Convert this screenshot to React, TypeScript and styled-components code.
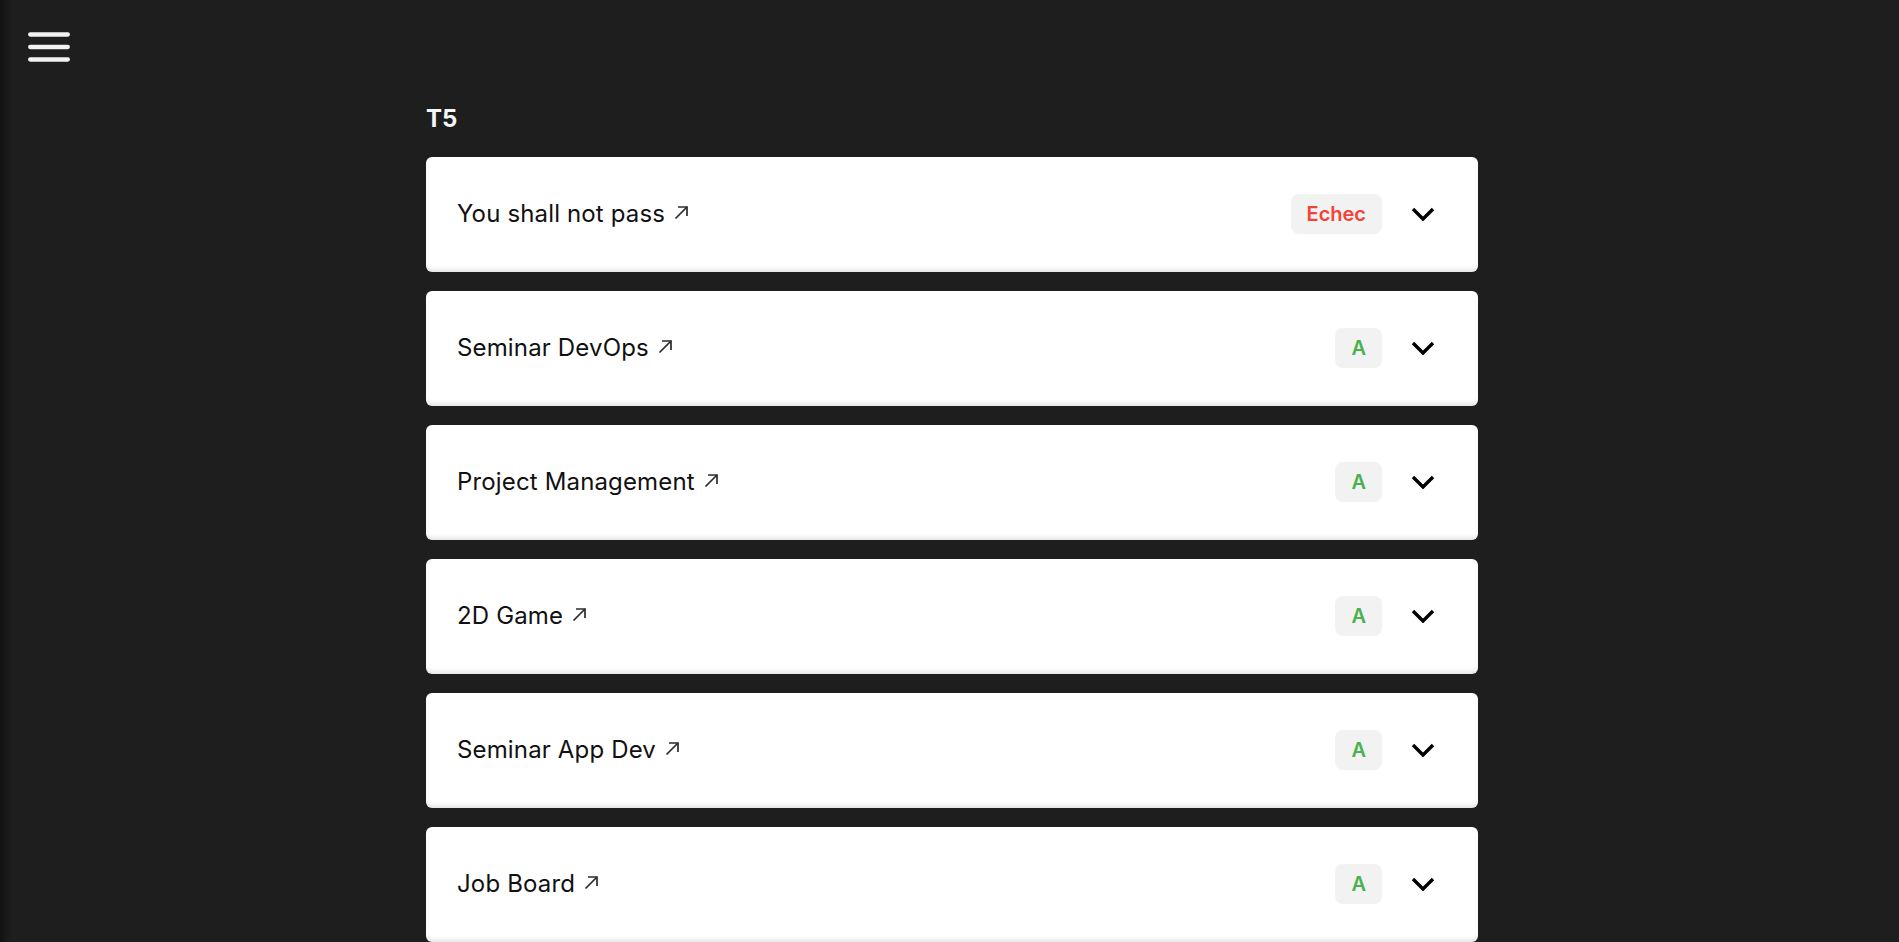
import React from 'react'
import styled, { createGlobalStyle } from 'styled-components'

interface Course {
  name: string
  grade: string
  failed?: boolean
}

const courses: Course[] = [
  { name: 'You shall not pass', grade: 'Echec', failed: true },
  { name: 'Seminar DevOps', grade: 'A' },
  { name: 'Project Management', grade: 'A' },
  { name: '2D Game', grade: 'A' },
  { name: 'Seminar App Dev', grade: 'A' },
  { name: 'Job Board', grade: 'A' },
]

const GlobalStyle = createGlobalStyle`
  html, body {
    margin: 0;
    padding: 0;
    background-color: #1e1e1e;
    background-image: linear-gradient(to right, #111111 0px, #171717 5px, #1e1e1e 12px);
    background-repeat: no-repeat;
    min-height: 100%;
    font-family: Inter, "Noto Sans", Roboto, sans-serif;
  }
  * {
    box-sizing: border-box;
  }
`

const Page = styled.div`
  min-height: 942px;
  overflow: hidden;
`

const Header = styled.header`
  padding: 32px 0 0 28px;
  height: 64px;
`

const MenuButton = styled.button`
  display: block;
  background: none;
  border: none;
  padding: 0;
  cursor: pointer;
  width: 42px;
  height: 32px;
`

const Main = styled.main`
  width: 1052px;
  margin: 0 auto;
  padding-left: 5px;
  box-sizing: content-box;
`

const SectionTitle = styled.h2`
  margin: 40px 0 24px;
  font-size: 24px;
  line-height: 29px;
  font-weight: 700;
  color: #f4f6f8;
`

const List = styled.div`
  display: flex;
  flex-direction: column;
  gap: 19px;
`

const Card = styled.div`
  height: 115px;
  background: #ffffff;
  border-radius: 6px;
  box-shadow: inset 0 -5px 5px -3px rgba(0, 0, 0, 0.12);
  display: flex;
  align-items: center;
  padding: 0 43px 2px 31px;
`

const CourseLink = styled.a`
  display: flex;
  align-items: center;
  gap: 9px;
  font-size: 24px;
  letter-spacing: 0.15px;
  color: #111111;
  text-decoration: none;
`

const Spacer = styled.div`
  flex: 1;
`

const Badge = styled.span<{ $failed?: boolean }>`
  height: 40px;
  padding: 0 16px;
  border-radius: 8px;
  background: #f2f2f2;
  display: flex;
  align-items: center;
  font-size: 20px;
  font-weight: 600;
  color: ${({ $failed }) => ($failed ? '#f44336' : '#4caf50')};
`

const ExpandButton = styled.button`
  margin-left: 29px;
  background: none;
  border: none;
  padding: 0;
  width: 24px;
  height: 14px;
  display: flex;
  cursor: pointer;
`

const MenuIcon = () => (
  <svg width="42" height="32" viewBox="0 0 42 32">
    <g stroke="#f2f2f2" strokeWidth="4.3" strokeLinecap="round">
      <line x1="2.2" y1="2.5" x2="39.8" y2="2.5" />
      <line x1="2.2" y1="15" x2="39.8" y2="15" />
      <line x1="2.2" y1="27.5" x2="39.8" y2="27.5" />
    </g>
  </svg>
)

const ExternalIcon = () => (
  <svg width="15" height="15" viewBox="0 0 15 15" style={{ marginTop: '-2px' }}>
    <g stroke="#2b2b2b" strokeWidth="1.7" fill="none">
      <line x1="1.5" y1="13.5" x2="13" y2="2" />
      <polyline points="4,2 13,2 13,11" />
    </g>
  </svg>
)

const ChevronIcon = () => (
  <svg width="24" height="14" viewBox="0 0 24 14">
    <polyline points="2,2 12,12 22,2" stroke="#000000" strokeWidth="3.4" fill="none" />
  </svg>
)

const CourseCard: React.FC<{ course: Course }> = ({ course }) => (
  <Card>
    <CourseLink href="#">
      {course.name}
      <ExternalIcon />
    </CourseLink>
    <Spacer />
    <Badge $failed={course.failed}>{course.grade}</Badge>
    <ExpandButton aria-label="expand">
      <ChevronIcon />
    </ExpandButton>
  </Card>
)

const App: React.FC = () => (
  <Page>
    <GlobalStyle />
    <Header>
      <MenuButton aria-label="menu">
        <MenuIcon />
      </MenuButton>
    </Header>
    <Main>
      <SectionTitle>T5</SectionTitle>
      <List>
        {courses.map((course) => (
          <CourseCard key={course.name} course={course} />
        ))}
      </List>
    </Main>
  </Page>
)

export default App
